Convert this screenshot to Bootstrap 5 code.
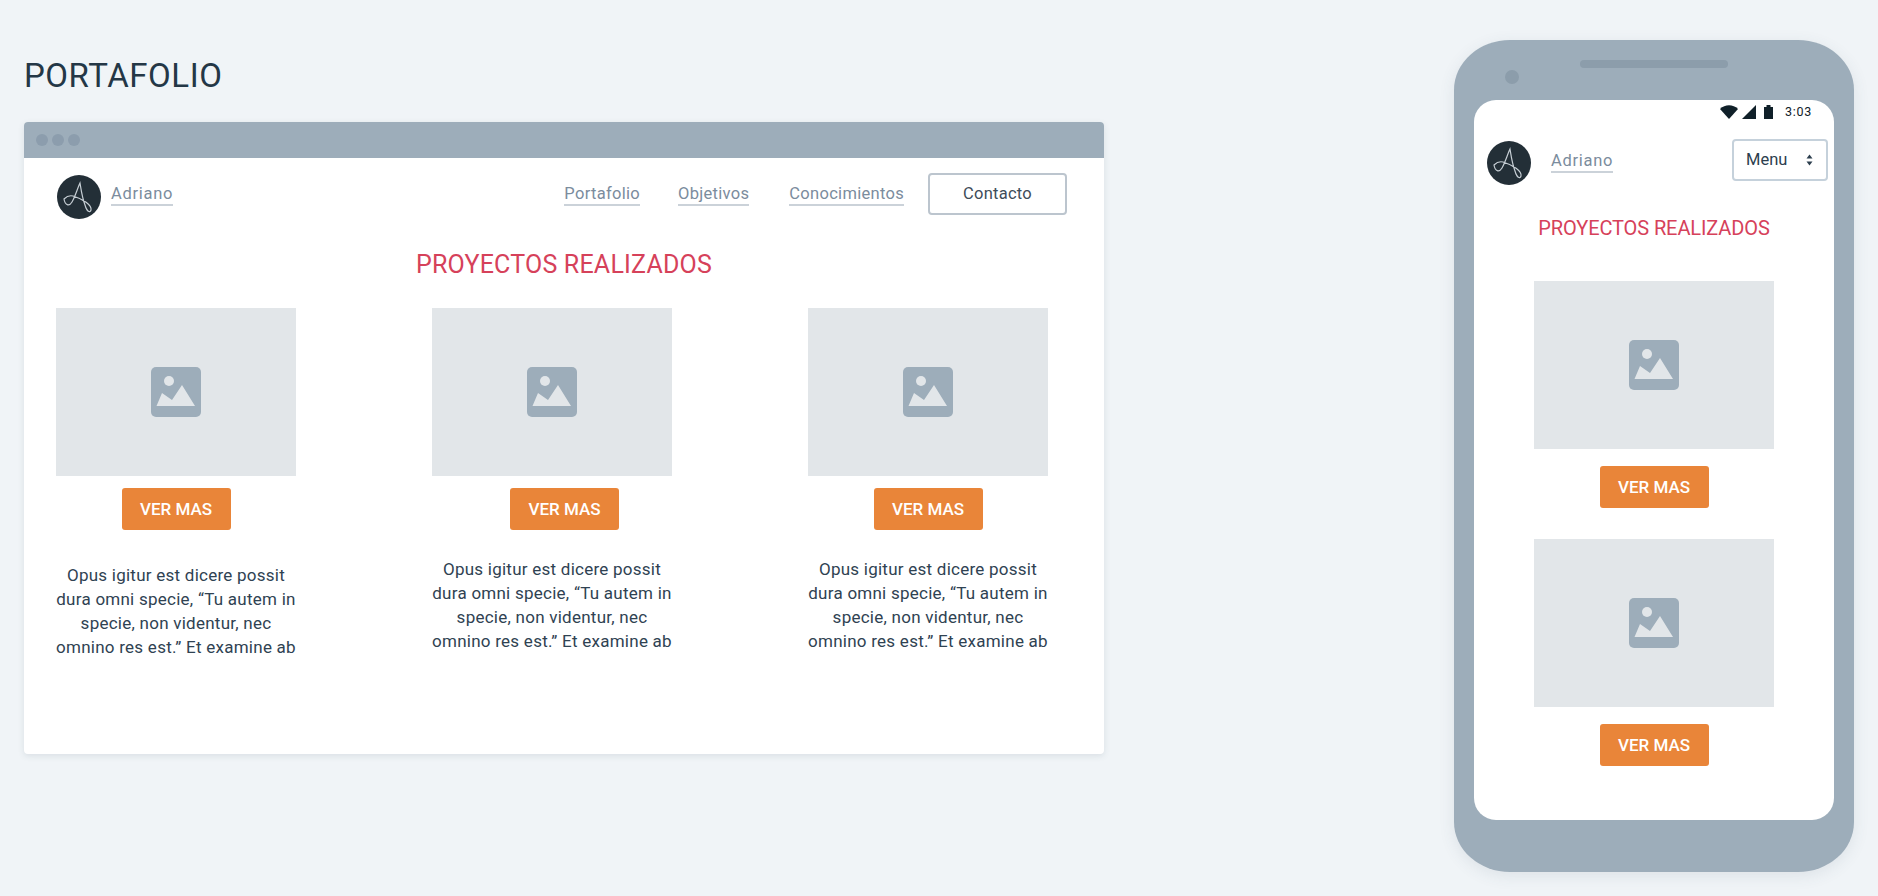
<!DOCTYPE html>
<html lang="es">
<head>
<meta charset="utf-8">
<title>Portafolio</title>
<link rel="stylesheet" href="https://cdn.jsdelivr.net/npm/bootstrap@5.3.0/dist/css/bootstrap.min.css">
<style>
html,body{height:100%}
body{background:#f0f4f7;font-family:Roboto,"Liberation Sans",sans-serif;color:#2c3e4e;overflow:hidden}
.page-wrap{padding:0 24px;height:896px}
.page-title{font-size:33px;font-weight:400;line-height:40px;margin:56px 0 26px;color:#243746;letter-spacing:.55px}
.win{width:1080px;height:632px;background:#fff;border-radius:4px;box-shadow:0 2px 6px rgba(60,80,100,.12);overflow:hidden}
.win-bar{height:36px;background:#9dadba;padding-left:12px;gap:4px}
.win-dot{width:12px;height:12px;border-radius:50%;background:#8c9dad}
.win-nav{padding:15px 37px 0 33px}
.logo{width:44px;height:44px;flex:none}
.brand-box{margin-top:2px}
.link-u{display:inline-block;color:#7b8c9d;font-size:16.5px;line-height:21px;border-bottom:2px solid #cbd2d9;text-decoration:none;letter-spacing:.3px}
.brand-name{margin-left:10px;margin-top:8px;letter-spacing:.7px}
.nav-a{margin-right:38px;margin-top:10px}
.nav-b{margin-right:40px;margin-top:10px}
.nav-c{margin-right:24px;margin-top:10px}
.btn-contact{width:139px;height:42px;border:2px solid #bcc5ce;border-radius:4px;color:#3e4c59;font-size:16.5px;padding:0;line-height:38px;background:#fff;letter-spacing:.25px}
.sec-title{color:#d6415a;font-weight:400;text-align:center;margin:0}
.win .sec-title{font-size:25px;line-height:32px;margin-top:30px;letter-spacing:.2px}
.gallery{padding:27px 0 0 32px;gap:136px}
.tile{width:240px}
.thumb{width:240px;height:168px;background:#e2e6e9}
.thumb svg{width:50px;height:50px}
.btn-more{display:block;width:109px;height:42px;margin:12px auto 0;background:#e98539;border:0;border-radius:3px;color:#fff;font-weight:500;font-size:17px;line-height:42px;padding:0}
.btn-more:hover{background:#e98539;color:#fff}
.shift-btn{margin-left:78px}
.blurb{font-size:17px;line-height:24px;text-align:center;margin:33px 0 0;color:#2f4252;white-space:nowrap;letter-spacing:.25px}
.blurb-high{margin-top:27px}
.phone{width:400px;height:832px;margin-top:40px;background:#9dadba;border-radius:56px/50px;padding:20px 20px 0;box-shadow:0 4px 16px rgba(60,80,100,.1)}
.speaker{width:148px;height:8px;background:#8c9dab;border-radius:4px;margin:0 auto}
.cam{width:14px;height:14px;border-radius:50%;background:#8c9dab;margin:2px 0 16px 31px}
.screen{width:360px;height:720px;background:#fff;border-radius:22px;overflow:hidden}
.status{height:24px;padding:5px 22px 0 0;font-size:12.5px;color:#102029;line-height:14px;letter-spacing:.7px}
.status svg{display:block}
.time{margin-left:12px}
.m-nav{padding:15px 6px 0 13px}
.m-logo{margin-top:2px}
.m-name{margin-left:20px;margin-bottom:4px;letter-spacing:.7px}
.menu-sel{width:96px;height:42px;border:2px solid #c5d1db;border-radius:4px;font-size:16.5px;color:#2c3e4e;padding:0 0 0 12px;font-family:inherit;background-position:right 12px center;background-size:9px 14px;background-image:url("data:image/svg+xml,%3Csvg xmlns='http://www.w3.org/2000/svg' viewBox='0 0 9 14'%3E%3Cpath fill='%232c3e4e' d='M4.500 1.500 7.500 5.500H1.500zM4.500 12.500 1.500 8.500H7.500z'/%3E%3C/svg%3E")}
.screen .sec-title{font-size:20px;line-height:26px;margin-top:30px;letter-spacing:-.1px}
.m-list{padding-top:40px}
.m-item{width:240px;margin:0 auto 31px}
.m-item .btn-more{margin-top:17px}
</style>
</head>
<body>
<svg width="0" height="0" class="d-block position-absolute">
  <defs>
    <symbol id="pic" viewBox="0 0 50 50">
      <rect width="50" height="50" rx="5" fill="#9dadba"/>
      <circle cx="18" cy="14" r="5" fill="#e2e6e9"/>
      <path d="M5.500 39 11 26 21 33 31 18 44 39Z" fill="#e2e6e9"/>
    </symbol>
    <symbol id="logo" viewBox="0 0 44 44">
      <circle cx="22" cy="22" r="22" fill="#232f37"/>
      <path d="M7 24C8 30 12 32 15 27 18 22 21 12 23 8 24 14 25 22 28 30 30 37 33 38 34 35 35 30 26 24 16 21 12 20 9 22 7 24Z" fill="none" stroke="#c6ced4" stroke-width="1.200"/>
    </symbol>
  </defs>
</svg>
<div class="page-wrap d-flex justify-content-between align-items-start">
  <main>
    <h1 class="page-title">PORTAFOLIO</h1>
    <section class="win">
      <div class="win-bar d-flex align-items-center">
        <span class="win-dot"></span><span class="win-dot"></span><span class="win-dot"></span>
      </div>
      <nav class="win-nav d-flex justify-content-between align-items-start">
        <div class="brand-box d-flex align-items-start">
          <svg class="logo"><use href="#logo"/></svg>
          <a class="link-u brand-name" href="#">Adriano</a>
        </div>
        <div class="d-flex align-items-start">
          <a class="link-u nav-a" href="#">Portafolio</a>
          <a class="link-u nav-b" href="#">Objetivos</a>
          <a class="link-u nav-c" href="#">Conocimientos</a>
          <button class="btn btn-contact" type="button">Contacto</button>
        </div>
      </nav>
      <h2 class="sec-title">PROYECTOS REALIZADOS</h2>
      <div class="gallery d-flex">
        <article class="tile">
          <div class="thumb d-flex align-items-center justify-content-center"><svg><use href="#pic"/></svg></div>
          <a class="btn btn-more" href="#">VER MAS</a>
          <p class="blurb">Opus igitur est dicere possit<br>dura omni specie, “Tu autem in<br>specie, non videntur, nec<br>omnino res est.” Et examine ab</p>
        </article>
        <article class="tile">
          <div class="thumb d-flex align-items-center justify-content-center"><svg><use href="#pic"/></svg></div>
          <a class="btn btn-more shift-btn" href="#">VER MAS</a>
          <p class="blurb blurb-high">Opus igitur est dicere possit<br>dura omni specie, “Tu autem in<br>specie, non videntur, nec<br>omnino res est.” Et examine ab</p>
        </article>
        <article class="tile">
          <div class="thumb d-flex align-items-center justify-content-center"><svg><use href="#pic"/></svg></div>
          <a class="btn btn-more" href="#">VER MAS</a>
          <p class="blurb blurb-high">Opus igitur est dicere possit<br>dura omni specie, “Tu autem in<br>specie, non videntur, nec<br>omnino res est.” Et examine ab</p>
        </article>
      </div>
    </section>
  </main>
  <aside class="phone">
    <div class="speaker"></div>
    <div class="cam"></div>
    <div class="screen">
      <div class="status d-flex justify-content-end align-items-start">
        <svg width="18" height="14" viewBox="0 0 18 14" class="me-1"><path d="M0 4C5-1 13-1 18 4L9 14Z" fill="#102029"/></svg>
        <svg width="14" height="14" viewBox="0 0 14 14"><path d="M14 0V14H0Z" fill="#102029"/></svg>
        <svg width="9" height="14" viewBox="0 0 9 14" class="ms-2"><path d="M0 2H2.500V0H6.500V2H9V14H0Z" fill="#102029"/></svg>
        <span class="time">3:03</span>
      </div>
      <nav class="m-nav d-flex justify-content-between align-items-start">
        <div class="d-flex align-items-center m-logo">
          <svg class="logo"><use href="#logo"/></svg>
          <a class="link-u m-name" href="#">Adriano</a>
        </div>
        <select class="form-select menu-sel" aria-label="Menu"><option>Menu</option></select>
      </nav>
      <h2 class="sec-title">PROYECTOS REALIZADOS</h2>
      <div class="m-list">
        <div class="m-item">
          <div class="thumb d-flex align-items-center justify-content-center"><svg><use href="#pic"/></svg></div>
          <a class="btn btn-more" href="#">VER MAS</a>
        </div>
        <div class="m-item">
          <div class="thumb d-flex align-items-center justify-content-center"><svg><use href="#pic"/></svg></div>
          <a class="btn btn-more" href="#">VER MAS</a>
        </div>
      </div>
    </div>
  </aside>
</div>
<script src="https://cdn.jsdelivr.net/npm/bootstrap@5.3.0/dist/js/bootstrap.bundle.min.js"></script>
</body>
</html>
